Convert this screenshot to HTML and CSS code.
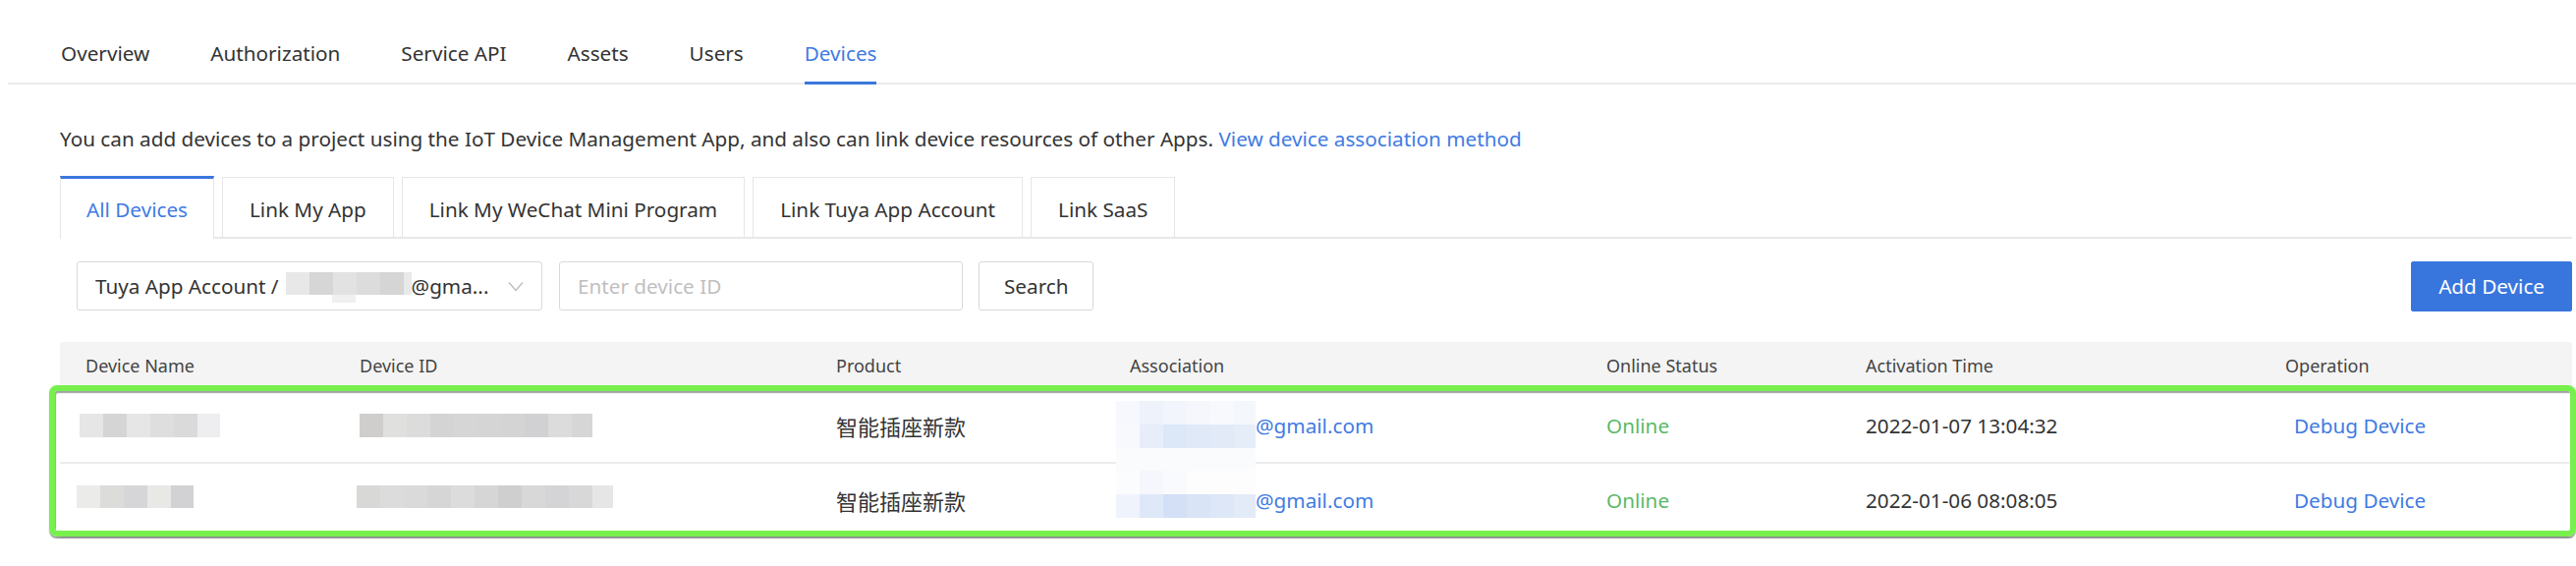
FILE: index.html
```html
<!DOCTYPE html>
<html lang="en">
<head>
<meta charset="utf-8">
<title>Devices</title>
<link rel="stylesheet" href="styles.css">
</head>
<body>
<nav class="topnav">
  <a class="nav-item">Overview</a>
  <a class="nav-item">Authorization</a>
  <a class="nav-item">Service API</a>
  <a class="nav-item">Assets</a>
  <a class="nav-item">Users</a>
  <a class="nav-item active">Devices</a>
</nav>
<main class="content">
  <p class="intro">You can add devices to a project using the IoT Device Management App, and also can link device resources of other Apps. <a class="link">View device association method</a></p>
  <div class="tabs">
    <div class="tab active">All Devices</div>
    <div class="tab">Link My App</div>
    <div class="tab">Link My WeChat Mini Program</div>
    <div class="tab">Link Tuya App Account</div>
    <div class="tab">Link SaaS</div>
  </div>
  <div class="toolbar">
    <div class="select">
      <span class="select-label">Tuya App Account /</span>
      <span class="blur blur-acct"></span>
      <span class="select-label">@gma...</span>
      <svg class="chev" viewBox="0 0 16 11" width="16" height="11"><polyline points="1,1.5 8,9.5 15,1.5" fill="none" stroke="#bdbdbd" stroke-width="1.4"/></svg>
    </div>
    <input class="search-input" type="text" placeholder="Enter device ID">
    <button class="btn">Search</button>
    <button class="btn primary">Add Device</button>
  </div>
  <div class="table-wrap">
    <table class="grid">
      <colgroup>
        <col class="w-name"><col class="w-id"><col class="w-product"><col class="w-assoc"><col class="w-status"><col class="w-time"><col class="w-op">
      </colgroup>
      <thead>
        <tr>
          <th>Device Name</th>
          <th>Device ID</th>
          <th>Product</th>
          <th>Association</th>
          <th>Online Status</th>
          <th>Activation Time</th>
          <th>Operation</th>
        </tr>
      </thead>
      <tbody>
        <tr>
          <td><span class="blur blur-name1"></span></td>
          <td><span class="blur blur-id1"></span></td>
          <td class="cjk">智能插座新款</td>
          <td><div class="assoc"><span class="blur blur-mail1"></span><a class="link">@gmail.com</a></div></td>
          <td class="online">Online</td>
          <td>2022-01-07 13:04:32</td>
          <td class="op"><a class="link">Debug Device</a></td>
        </tr>
        <tr>
          <td><span class="blur blur-name2"></span></td>
          <td><span class="blur blur-id2"></span></td>
          <td class="cjk">智能插座新款</td>
          <td><div class="assoc"><span class="blur blur-mail2"></span><a class="link">@gmail.com</a></div></td>
          <td class="online">Online</td>
          <td>2022-01-06 08:08:05</td>
          <td class="op"><a class="link">Debug Device</a></td>
        </tr>
      </tbody>
    </table>
    <div class="highlight"></div>
  </div>
</main>
</body>
</html>
```
FILE: styles.css
```css
* { box-sizing: border-box; }
html, body { margin: 0; padding: 0; background: #fff; }
body {
  font-family: "Noto Sans", "Open Sans", "Noto Sans CJK SC", sans-serif;
  font-size: 20.7px;
  color: #333;
  width: 2622px;
  overflow: hidden;
}
a { text-decoration: none; cursor: pointer; }
.link { color: #3f7be3; }

/* top navigation */
.topnav {
  margin-left: 8px;
  padding-left: 54px;
  height: 86px;
  border-bottom: 2px solid #ebebeb;
  display: flex;
  align-items: flex-end;
  gap: 62px;
}
.nav-item {
  font-size: 20.7px;
  line-height: 30px;
  padding-bottom: 14px;
  border-bottom: 3px solid transparent;
  margin-bottom: -2px;
  color: #333;
}
.nav-item.active {
  color: #3f7be3;
  border-bottom-color: #3a77dd;
}

/* content */
.content { padding: 0 4px 0 61px; }
.intro {
  margin: 40px 0 0 0;
  line-height: 30px;
  font-size: 20.7px;
  color: #333;
}

/* tabs */
.tabs {
  margin-top: 23px;
  height: 64px;
  display: flex;
  align-items: flex-end;
  gap: 8px;
  border-bottom: 2px solid #e8e8e8;
}
.tab {
  height: 61px;
  padding: 3px 27px 0;
  border: 1px solid #e6e6e6;
  border-bottom: 0;
  background: #fff;
  display: flex;
  align-items: center;
  color: #333;
  white-space: nowrap;
}
.tab.active {
  height: 64px;
  margin-bottom: -2px;
  padding: 0 26px;
  border-top: 3px solid #3a77dd;
  color: #3f7be3;
}

/* toolbar */
.toolbar {
  margin-top: 23px;
  padding-left: 17px;
  height: 50px;
  display: flex;
  align-items: center;
}
.select {
  width: 474px;
  height: 50px;
  border: 1px solid #d9d9d9;
  border-radius: 3px;
  padding: 0 18px;
  display: flex;
  align-items: center;
  white-space: nowrap;
}
.select-label { line-height: 30px; }
.chev { margin-left: auto; flex: none; }
.search-input {
  width: 411px;
  height: 50px;
  margin-left: 17px;
  border: 1px solid #d9d9d9;
  border-radius: 3px;
  padding: 0 18px;
  font-family: "Noto Sans", "Open Sans", sans-serif;
  font-size: 20.7px;
  color: #333;
  outline: none;
}
.search-input::placeholder { color: #bfbfbf; }
.btn {
  height: 50px;
  margin-left: 16px;
  padding: 0 25px;
  border: 1px solid #d9d9d9;
  border-radius: 3px;
  background: #fff;
  font-family: "Noto Sans", "Open Sans", sans-serif;
  font-size: 20.7px;
  color: #333;
}
.btn.primary {
  margin-left: auto;
  height: 51px;
  padding: 0 27px;
  background: #3876de;
  border-color: #3876de;
  border-radius: 2px;
  color: #fff;
}

/* table */
.table-wrap {
  position: relative;
  margin-top: 32px;
}
.grid {
  width: 2557px;
  table-layout: fixed;
  border-collapse: separate;
  border-spacing: 0;
}
.w-name { width: 279px; }
.w-id { width: 485px; }
.w-product { width: 299px; }
.w-assoc { width: 485px; }
.w-status { width: 264px; }
.w-time { width: 427px; }
.w-op { width: 318px; }
.grid th {
  height: 48px;
  background: #f4f4f4;
  font-size: 18px;
  font-weight: normal;
  color: #444;
  text-align: left;
  padding: 0 0 0 26px;
  white-space: nowrap;
}
.grid tbody tr { height: 76px; }
.grid td {
  padding: 0 0 0 26px;
  border-bottom: 2px solid #ececec;
  font-size: 20.7px;
  color: #333;
  vertical-align: middle;
  white-space: nowrap;
}
.grid td.cjk {
  font-family: "Noto Sans CJK SC", "Noto Sans", sans-serif;
  font-size: 22px;
}
.grid td.online { color: #5cb867; }
.grid td.op { padding-left: 35px; }

.assoc {
  height: 30px;
  display: flex;
  align-items: center;
  margin-left: -14px;
  line-height: 30px;
}

/* pixelated redactions */
.blur { display: block; flex: none; }
.blur-acct {
  display: inline-block;
  width: 128px;
  height: 31px;
  margin-left: 7px;
  margin-top: 3px;
  background:
    linear-gradient(90deg, #e8e8e8 0 24px, #d6d6d6 24px 48px, #e2e2e2 48px 72px, #dcdcdc 72px 96px, #d5d5d5 96px 120px, #e9e9e9 120px) 0 0 / 100% 23px no-repeat,
    linear-gradient(#f0f0f0, #f0f0f0) 47px 23px / 24px 8px no-repeat;
}
.blur-name1 {
  width: 143px;
  height: 24px;
  margin-left: -6px;
  background: linear-gradient(90deg, #e6e6e6 0 24px, #d5d5d5 24px 48px, #e6e6e7 48px 72px, #dedede 72px 96px, #dadada 96px 120px, #eeeef0 120px);
}
.blur-name2 {
  width: 119px;
  height: 23px;
  margin-left: -9px;
  margin-bottom: 7px;
  background: linear-gradient(90deg, #ebebe9 0 24px, #dcdcdb 24px 48px, #d6d6d8 48px 72px, #e8e8e6 72px 96px, #d2d2d4 96px);
}
.blur-id1 {
  width: 237px;
  height: 24px;
  background: linear-gradient(90deg, #cfcecc 0 24px, #e0e0de 24px 48px, #dcdcdc 48px 72px, #d4d4d4 72px 96px, #d6d6d6 96px 120px, #d5d5d5 120px 144px, #d4d4d4 144px 168px, #d1d1d3 168px 192px, #dcdcdc 192px 216px, #d6d6d6 216px);
}
.blur-id2 {
  width: 261px;
  height: 23px;
  margin-left: -3px;
  margin-bottom: 7px;
  background: linear-gradient(90deg, #d8d8d6 0 24px, #dcdcdc 24px 48px, #dadada 48px 72px, #d6d6d6 72px 96px, #dcdcdc 96px 120px, #d6d6d6 120px 144px, #cfcfcf 144px 168px, #d8d8d8 168px 192px, #d4d4d6 192px 216px, #d8d8d8 216px 240px, #e6e6e6 240px);
}
.blur-mail1 {
  width: 142px;
  height: 72px;
  margin-top: 22px;
  background:
    linear-gradient(90deg, #f6f8fd 0 24px, #edf2fb 24px 48px, #f2f5fc 48px 72px, #f5f7fc 72px 96px, #f7f9fd 96px 120px, #f4f7fc 120px) 0 0 / 100% 24px no-repeat,
    linear-gradient(90deg, #f7f9fd 0 24px, #e7eef9 24px 48px, #dce7f7 48px 72px, #e0e9f8 72px 96px, #e2eaf8 96px 120px, #e5edf9 120px) 0 24px / 100% 24px no-repeat,
    linear-gradient(#fafbfd, #fafbfd) 0 48px / 100% 24px no-repeat;
}
.blur-mail2 {
  width: 142px;
  height: 48px;
  margin-bottom: 12px;
  background:
    linear-gradient(90deg, #fbfcfe 0 24px, #f5f7fc 24px 48px, #f9fafd 48px 72px, #fdfdfe 72px) 0 0 / 100% 24px no-repeat,
    linear-gradient(90deg, #eff3fb 0 24px, #dfe8f8 24px 48px, #d3e0f5 48px 72px, #d9e4f6 72px 96px, #dde7f7 96px 120px, #e3ebf8 120px) 0 24px / 100% 24px no-repeat;
}

/* annotation highlight drawn over the rows */
.highlight {
  position: absolute;
  top: 44px;
  left: -11px;
  right: -4px;
  height: 154px;
  border: 6px solid #77f04d;
  border-radius: 8px;
  box-shadow: 0 2px 1px rgba(70, 70, 70, 0.55), inset 1px 2px 1px rgba(70, 70, 70, 0.5);
  pointer-events: none;
}
```
